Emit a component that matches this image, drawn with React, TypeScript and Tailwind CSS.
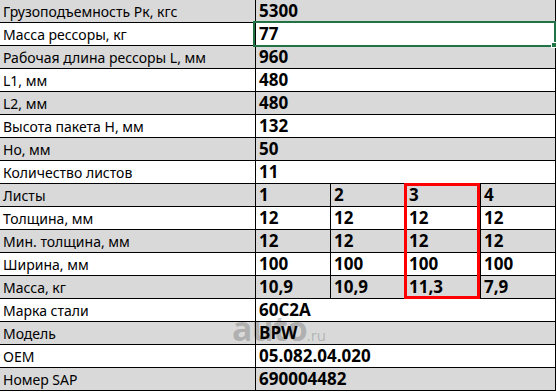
const single: [string, string][] = [
  ['Грузоподъемность Рк, кгс', '5300'],
  ['Масса рессоры, кг', '77'],
  ['Рабочая длина рессоры L, мм', '960'],
  ['L1, мм', '480'],
  ['L2, мм', '480'],
  ['Высота пакета H, мм', '132'],
  ['Но, мм', '50'],
  ['Количество листов', '11'],
]

const leaves: [string, string[]][] = [
  ['Листы', ['1', '2', '3', '4']],
  ['Толщина, мм', ['12', '12', '12', '12']],
  ['Мин. толщина, мм', ['12', '12', '12', '12']],
  ['Ширина, мм', ['100', '100', '100', '100']],
  ['Масса, кг', ['10,9', '10,9', '11,3', '7,9']],
]

const tail: [string, string][] = [
  ['Марка стали', '60С2А'],
  ['Модель', 'BPW'],
  ['OEM', '05.082.04.020'],
  ['Номер SAP', '690004482'],
]

const label = "font-['Noto_Sans',sans-serif] text-[14px] text-black pl-[3px] whitespace-nowrap"
const value = "font-['Open_Sans',sans-serif] font-bold text-[17px] text-black pl-[3px] whitespace-nowrap"

function Row({ idx, children }: { idx: number; children: React.ReactNode }) {
  const bg = idx % 2 === 0 ? 'bg-[#d9d9d9]' : 'bg-white'
  return <div className={`flex h-[23px] border-b border-black ${bg}`}>{children}</div>
}

function Label({ text }: { text: string }) {
  return (
    <div className={`w-[256px] shrink-0 border-r border-black flex items-center ${label}`}>
      {text}
    </div>
  )
}

export default function App() {
  let i = 0
  return (
    <div className="relative w-[557px] h-[392px] bg-white overflow-hidden">
      <div className="w-[556px] border-r border-black -mt-px border-t border-t-black">
        {single.map(([l, v]) => (
          <Row key={l} idx={i++}>
            <Label text={l} />
            <div className={`flex-1 flex items-center ${value}`}>{v}</div>
          </Row>
        ))}
        {leaves.map(([l, vs]) => (
          <Row key={l} idx={i++}>
            <Label text={l} />
            {vs.map((v, j) => (
              <div
                key={j}
                className={`flex items-center ${value} ${j < 3 ? 'w-[75px] border-r border-black' : 'flex-1'}`}
              >
                {v}
              </div>
            ))}
          </Row>
        ))}
        {tail.map(([l, v]) => (
          <Row key={l} idx={i++}>
            <Label text={l} />
            <div className={`flex-1 flex items-center ${value}`}>{v}</div>
          </Row>
        ))}
      </div>

      {/* selected cell */}
      <div className="absolute left-[253px] top-[21px] w-[303px] h-[26px] border-2 border-[#217346]" />
      <div className="absolute left-[551px] top-[42px] w-[6px] h-[6px] bg-[#217346] border border-white" />

      {/* highlighted column */}
      <div className="absolute left-[404px] top-[183px] w-[76px] h-[116px] border-[3px] border-[#ff0000]" />

      {/* watermark */}
      <div className="absolute left-[232px] top-[303px] flex items-baseline text-black/20 pointer-events-none select-none font-['Open_Sans',sans-serif]">
        <span className="text-[34px] font-bold tracking-[-1px]">auto</span>
        <span className="text-[15px]">.ru</span>
      </div>
    </div>
  )
}
